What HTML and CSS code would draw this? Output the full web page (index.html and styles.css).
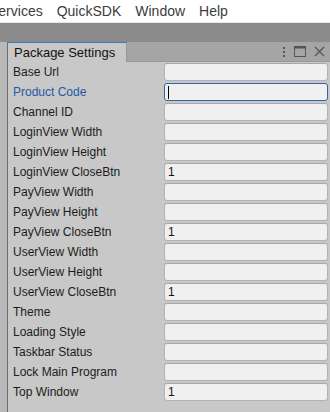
FILE: index.html
```html
<!DOCTYPE html>
<html lang="en">
<head>
    <meta charset="UTF-8">
    <meta name="viewport" content="width=device-width, initial-scale=1.0">
    <title>Package Settings</title>
    <link rel="stylesheet" href="styles.css">
</head>
<body>

    <div class="menubar">
        <span class="menu-item cut">Services</span>
        <span class="menu-item">QuickSDK</span>
        <span class="menu-item">Window</span>
        <span class="menu-item">Help</span>
    </div>

    <div class="toolbar"></div>

    <div class="dock">
        <div class="left-strip"></div>
        <div class="window">
            <div class="tabbar">
                <div class="tab">Package Settings</div>
                <div class="tab-icons">
                    <svg width="4" height="12" viewBox="0 0 4 12"><rect x="1" y="1" width="2" height="2" fill="#555"/><rect x="1" y="5" width="2" height="2" fill="#555"/><rect x="1" y="9" width="2" height="2" fill="#555"/></svg>
                    <svg width="12" height="11" viewBox="0 0 12 11"><rect x="0.5" y="0.5" width="11" height="10" fill="none" stroke="#555"/><rect x="0.5" y="0.5" width="11" height="2" fill="#555"/></svg>
                    <svg width="11" height="11" viewBox="0 0 11 11"><path d="M1 1L10 10M10 1L1 10" stroke="#555" stroke-width="1.3"/></svg>
                </div>
            </div>
            <div class="content">
                <div class="row"><label>Base Url</label><div class="field"></div></div>
                <div class="row"><label class="active">Product Code</label><div class="field focused"><span class="caret"></span></div></div>
                <div class="row"><label>Channel ID</label><div class="field"></div></div>
                <div class="row"><label>LoginView Width</label><div class="field"></div></div>
                <div class="row"><label>LoginView Height</label><div class="field"></div></div>
                <div class="row"><label>LoginView CloseBtn</label><div class="field">1</div></div>
                <div class="row"><label>PayView Width</label><div class="field"></div></div>
                <div class="row"><label>PayView Height</label><div class="field"></div></div>
                <div class="row"><label>PayView CloseBtn</label><div class="field">1</div></div>
                <div class="row"><label>UserView Width</label><div class="field"></div></div>
                <div class="row"><label>UserView Height</label><div class="field"></div></div>
                <div class="row"><label>UserView CloseBtn</label><div class="field">1</div></div>
                <div class="row"><label>Theme</label><div class="field"></div></div>
                <div class="row"><label>Loading Style</label><div class="field"></div></div>
                <div class="row"><label>Taskbar Status</label><div class="field"></div></div>
                <div class="row"><label>Lock Main Program</label><div class="field"></div></div>
                <div class="row"><label>Top Window</label><div class="field">1</div></div>
            </div>
        </div>
    </div>

</body>
</html>
```

FILE: styles.css
```css
body {
    margin: 0;
    padding: 0;
    font-family: "Liberation Sans", Arial, sans-serif;
    background-color: #c8c8c8;
    overflow: hidden;
}
.menubar {
    height: 22px;
    background-color: #ffffff;
    display: flex;
    align-items: center;
    gap: 14px;
    font-size: 14px;
    color: #3c3c3c;
    white-space: nowrap;
    overflow: hidden;
    border-bottom: 1px solid #e6e6e6;
}
.menu-item.cut {
    margin-left: -11px;
}
.toolbar {
    height: 19px;
    background-color: #8b8b8b;
}
.dock {
    display: flex;
    height: 370px;
}
.left-strip {
    width: 7px;
    background-color: #b9b9b9;
    border-right: 1px solid #6e6e6e;
}
.window {
    flex-grow: 1;
    background-color: #c8c8c8;
}
.tabbar {
    height: 20px;
    display: flex;
    justify-content: space-between;
    align-items: center;
    background-color: #a5a5a5;
    border-bottom: 1px solid #999;
    box-sizing: border-box;
}
.tab {
    align-self: stretch;
    width: 119px;
    padding-left: 6px;
    box-sizing: border-box;
    background-color: #c8c8c8;
    border-top: 1px solid #3a79bb;
    border-right: 1px solid #999;
    margin-bottom: -1px;
    font-size: 13px;
    line-height: 19px;
    color: #111;
}
.tab-icons {
    display: flex;
    align-items: center;
    gap: 8px;
    padding-right: 5px;
}
.row {
    height: 20px;
    display: flex;
    align-items: center;
}
label {
    width: 151px;
    padding-left: 5px;
    font-size: 12px;
    color: #1c1c1c;
}
label.active {
    color: #1e5aa5;
}
.field {
    width: 159px;
    height: 16px;
    background-color: #f0f0f0;
    border: 1px solid #b2b2b2;
    border-top-color: #a8a8a8;
    border-radius: 3px;
    font-size: 12px;
    line-height: 16px;
    padding-left: 3px;
    box-sizing: content-box;
    color: #111;
}
.field.focused {
    border-color: #2f65a6;
    display: flex;
    align-items: center;
}
.caret {
    width: 1px;
    height: 13px;
    background-color: #000;
}
```
